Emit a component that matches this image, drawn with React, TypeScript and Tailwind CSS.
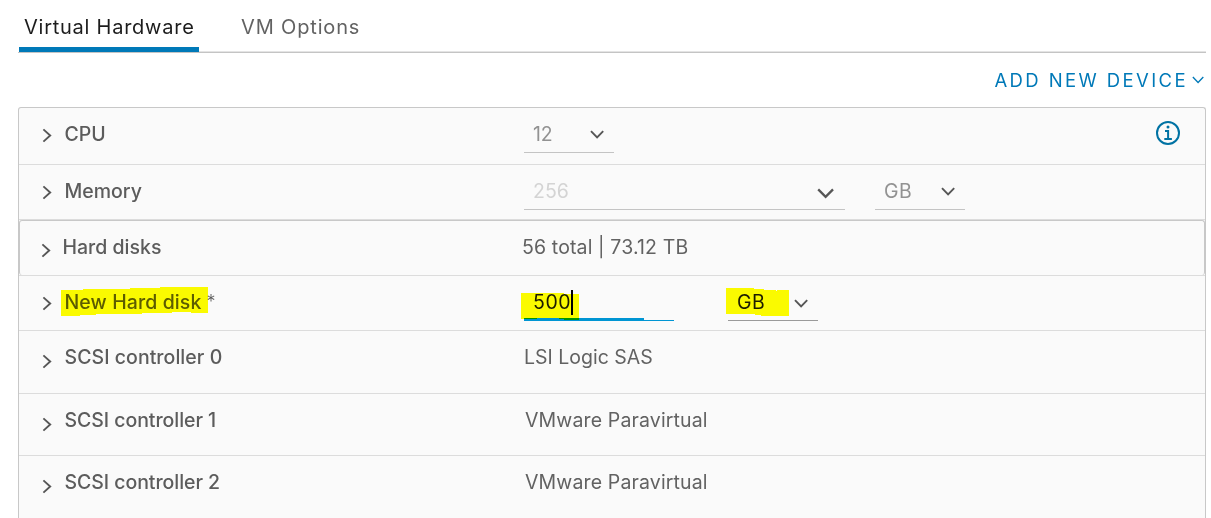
import React, { type ReactNode } from 'react';

function ChevronRight({ className = '' }: { className?: string }) {
  return (
    <svg className={`block h-[15px] w-[10px] shrink-0 ${className}`} viewBox="0 0 10 15" fill="none" stroke="#565656" strokeWidth="1.9">
      <path d="M1.4 1.4 8.2 7.5 1.4 13.6" />
    </svg>
  );
}

function ChevronDown({ className, color = '#565656', weight = 1.9 }: { className: string; color?: string; weight?: number }) {
  return (
    <svg className={`block shrink-0 ${className}`} viewBox="0 0 14 9" fill="none" stroke={color} strokeWidth={weight}>
      <path d="M1 1.1 7.1 7.3 13.2 1.1" />
    </svg>
  );
}

function InfoIcon({ className }: { className: string }) {
  return (
    <svg className={`block h-[26px] w-[26px] shrink-0 ${className}`} viewBox="0 0 26 26" fill="none" stroke="#0072a3" strokeWidth="2">
      <circle cx="13" cy="13" r="11" />
      <circle cx="13" cy="7" r="1.5" fill="#0072a3" stroke="none" />
      <path d="M10 11h3.1v7.8M9.3 19h7.6" />
    </svg>
  );
}

type RowProps = {
  label: ReactNode;
  className: string;
  chevron: string;
  text: string;
  children?: ReactNode;
};

function Row({ label, className, chevron, text, children }: RowProps) {
  return (
    <div className={`flex shrink-0 items-start ${className}`}>
      <div className={`flex shrink-0 items-start font-medium ${text}`}>
        <ChevronRight className={chevron} />
        <span className="ml-[12.5px]">{label}</span>
      </div>
      {children}
    </div>
  );
}

const labelText = 'w-[504px] pl-[23px] text-[#5c5c5c]';

export default function App() {
  return (
    <div className="flex h-[518px] w-[1211px] flex-col overflow-hidden bg-white pl-[18px] font-['Inter',sans-serif] text-[19.5px] leading-6 whitespace-nowrap text-[#626262]">
      <nav className="flex h-[53px] w-[1188px] shrink-0 items-end border-b border-[#c4c4c4] text-[20px]">
        <div className="ml-px flex h-[52px] w-[180px] border-b-[5px] border-[#0079b8] pt-[15px] pl-[5px] tracking-[0.75px] text-[#1c1c1c]">
          Virtual Hardware
        </div>
        <div className="flex h-[52px] flex-1 border-b border-[#e4e4e4] pt-[15px] pl-[42px] tracking-[0.85px]">VM Options</div>
      </nav>

      <div className="flex h-[54px] w-[1188px] shrink-0 justify-end pt-[15px] text-[18.5px] text-[#0079b8]">
        <span className="tracking-[2.4px]">ADD NEW DEVICE</span>
        <ChevronDown className="mt-[8px] mr-[2px] ml-[4px] h-[8px] w-[12px]" color="#0079b8" weight={1.6} />
      </div>

      <main className="flex h-[420px] w-[1188px] shrink-0 flex-col rounded-t-[3px] border border-b-0 border-[#c8c8c8] bg-[#fafafa]">
        <Row className="h-[57px] border-b border-[#dcdcdc]" chevron="mt-[6px]" text={`${labelText} pt-[14px]`} label={<span className="tracking-[0px]">CPU</span>}>
          <div className="ml-px flex h-[45px] w-[90px] border-b border-[#c4c4c4] pt-[14px] pl-[9px] text-[#929292]">
            <span className="w-[57px] tracking-[-0.2px]">12</span>
            <ChevronDown className="mt-[8px] h-[9px] w-[14px]" />
          </div>
          <InfoIcon className="mt-[12px] mr-[24px] ml-auto" />
        </Row>

        <Row className="h-[55px] border-b border-[#dcdcdc]" chevron="mt-[6px]" text={`${labelText} pt-[14px]`} label={<span className="tracking-[0px]">Memory</span>}>
          <div className="ml-px flex h-[45px] w-[321px] border-b border-[#c4c4c4] pt-[14px] pl-[9px] text-[#d4d4d4]">
            <span className="w-[284px]">256</span>
            <ChevronDown className="mt-[9px] h-[11px] w-[17px]" />
          </div>
          <div className="ml-[30px] flex h-[45px] w-[90px] border-b border-[#c4c4c4] pt-[14px] pl-[9px] text-[#929292]">
            <span className="w-[57px] tracking-[0.4px]">GB</span>
            <ChevronDown className="mt-[8px] h-[9px] w-[14px]" />
          </div>
        </Row>

        <div className="shrink-0 border-b border-[#dcdcdc]">
          <Row
            className="h-[55px] rounded-[3px] border border-b-0 border-[#c8c8c8]"
            chevron="mt-[8px]"
            text="w-[502px] pl-[21px] pt-[14px] text-[#5c5c5c]"
            label={<span className="-ml-px tracking-[0px]">Hard disks</span>}
          >
            <span className="pt-[14px] tracking-[0.13px]">56 total | 73.12 TB</span>
          </Row>
        </div>

        <Row
          className="h-[55px] border-b border-[#dcdcdc]"
          chevron="mt-[6px]"
          text={`${labelText} pt-[14px]`}
          label={
            <span className="relative tracking-[0.1px]">
              New Hard disk
              <span className="relative top-[-1px] ml-[5px] text-[18px] font-light">*</span>
              <svg className="absolute top-[-4px] left-[-3.5px] h-[30px] w-[148px] mix-blend-multiply" viewBox="0 0 148 30">
                <path d="M0 4H22V3H69V2H99V1H147V27H130V26H111V27H81V28H35V29H19V30H0Z" fill="#ffff00" />
              </svg>
            </span>
          }
        >
          <div className="relative ml-px flex h-[45px] w-[150px] items-end border-b border-[#0095d3]">
            <span className="absolute top-[14px] left-[9px] tracking-[0.6px] text-[#1c1c1c]">500</span>
            <div className="absolute top-[14px] left-[47px] h-[25px] w-[2px] bg-black" />
            <div className="absolute top-[42px] left-0 h-[3px] w-[120px] bg-[#0095d3]" />
            <svg className="absolute top-[17px] left-[-3px] h-[27px] w-[58px] mix-blend-multiply" viewBox="0 0 58 27">
              <path d="M0 0H43V1H58V27H43V26H38V25H16V26H0Z" fill="#ffff00" />
            </svg>
          </div>
          <div className="relative ml-[54px] flex h-[45px] w-[90px] border-b border-[#9a9a9a] pt-[14px] pl-[9px] text-[#1c1c1c]">
            <span className="w-[57px] tracking-[0.4px]">GB</span>
            <ChevronDown className="mt-[9px] h-[9px] w-[14px]" />
            <svg className="absolute top-[12px] left-[-2px] h-[28px] w-[63px] mix-blend-multiply" viewBox="0 0 63 28">
              <path d="M0 0H28V1H38V2H50V3H51V2H63V28H35V27H29V26H0Z" fill="#ffff00" />
            </svg>
          </div>
        </Row>

        <Row className="h-[63px] border-b border-[#dcdcdc]" chevron="mt-[9px]" text={`${labelText} pt-[14px]`} label={<span className="tracking-[0.05px]">SCSI controller 0</span>}>
          <span className="ml-[1px] pt-[14px] tracking-[0px]">LSI Logic SAS</span>
        </Row>
        <Row className="h-[62px] border-b border-[#dcdcdc]" chevron="mt-[9px]" text={`${labelText} pt-[14px]`} label={<span className="tracking-[-0.05px]">SCSI controller 1</span>}>
          <span className="ml-[2px] pt-[14px] tracking-[0.14px]">VMware Paravirtual</span>
        </Row>
        <Row className="h-[62px]" chevron="mt-[9px]" text={`${labelText} pt-[14px]`} label={<span className="tracking-[-0.05px]">SCSI controller 2</span>}>
          <span className="ml-[2px] pt-[14px] tracking-[0.14px]">VMware Paravirtual</span>
        </Row>
      </main>
    </div>
  );
}
